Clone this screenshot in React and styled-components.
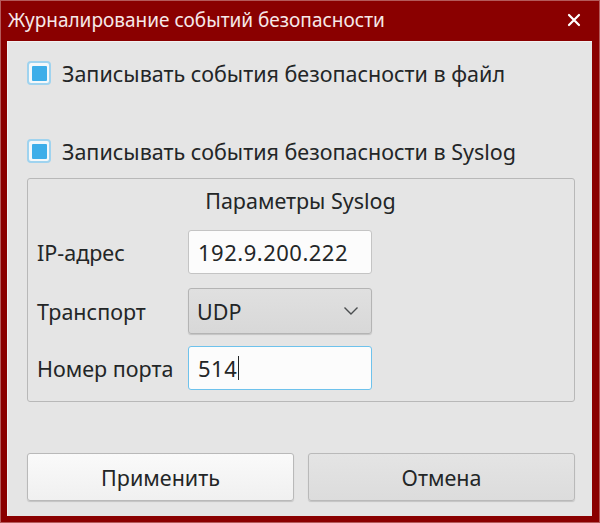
import React from "react";
import styled, { createGlobalStyle } from "styled-components";

const Global = createGlobalStyle`
  html, body {
    margin: 0;
    padding: 0;
    background: #8b0000;
  }
  * { box-sizing: border-box; }
`;

const Window = styled.div`
  width: 600px;
  height: 523px;
  background: #8a0000;
  border: 1px solid #b45a5a;
  display: flex;
  flex-direction: column;
  font-family: "Noto Sans", "Open Sans", sans-serif;
  color: #232627;
`;

const TitleBar = styled.div`
  height: 40px;
  flex: 0 0 40px;
  display: flex;
  align-items: center;
  justify-content: space-between;
  padding: 0 18px 2px 7px;
  color: #f6e8e8;
  font-size: 19px;
`;

const Close = styled.span`
  display: flex;
  align-items: center;
`;

const Panel = styled.div`
  flex: 1;
  margin: 0 7px 6px 6px;
  background: #e5e5e5;
  border-top: 1px solid #f2f2f2;
  border-left: 1px solid #f2f2f2;
  padding: 19px 17px 15px 19px;
  display: flex;
  flex-direction: column;
`;

const CheckRow = styled.label`
  display: flex;
  align-items: center;
  gap: 11px;
  height: 24px;
  font-size: 21.5px;
  margin-top: ${(p) => p.$top || 0}px;
`;

const Box = styled.span`
  flex: 0 0 24px;
  width: 24px;
  height: 24px;
  border-radius: 4px;
  border: 2px solid #9fd3ef;
  background: #f4f8fa;
  display: flex;
  align-items: center;
  justify-content: center;
  &::after {
    content: "";
    width: 15px;
    height: 15px;
    border-radius: 1px;
    background: #3daee9;
  }
`;

const Group = styled.fieldset`
  margin: 15px 0 0 0;
  padding: 0 10px 11px 9px;
  height: 224px;
  border: 1px solid #b8b8b8;
  border-radius: 3px;
  display: flex;
  flex-direction: column;
  min-width: 0;
`;

const GroupTitle = styled.div`
  text-align: center;
  font-size: 21.5px;
  height: 51px;
  line-height: 44px;
`;

const FormRow = styled.div`
  display: grid;
  grid-template-columns: 151px 184px;
  align-items: center;
  height: 44px;
  margin-bottom: 14px;
  font-size: 21.5px;
  &:last-child {
    margin-bottom: 0;
  }
`;

const Input = styled.div`
  height: 44px;
  background: #fcfcfc;
  border: 1px solid ${(p) => (p.$focus ? "#6ec2ec" : "#c4c4c4")};
  border-radius: 3px;
  display: flex;
  align-items: center;
  padding-left: 9px;
  font-size: 22px;
  letter-spacing: 0.5px;
`;

const Caret = styled.span`
  display: inline-block;
  width: 1px;
  height: 24px;
  background: #232627;
  margin-left: 1px;
`;

const Combo = styled.div`
  height: 46px;
  background: linear-gradient(#e0e0e0, #d8d8d8);
  border: 1px solid #b4b4b4;
  border-radius: 3px;
  box-shadow: 0 1px 1px rgba(0, 0, 0, 0.15);
  display: flex;
  align-items: center;
  justify-content: space-between;
  padding: 0 12px 0 8px;
  font-size: 21.5px;
`;

const Footer = styled.div`
  margin-top: auto;
  display: grid;
  grid-template-columns: 1fr 1fr;
  gap: 14px;
`;

const Button = styled.button`
  height: 48px;
  font-family: inherit;
  font-size: 21.5px;
  color: #232627;
  border: 1px solid #b9b9b9;
  border-radius: 3px;
  box-shadow: 0 1px 1px rgba(0, 0, 0, 0.15);
  background: ${(p) =>
    p.$primary ? "linear-gradient(#fafafa, #f0f0f0)" : "linear-gradient(#e4e4e4, #dcdcdc)"};
`;

export default function App() {
  return (
    <>
      <Global />
      <Window>
        <TitleBar>
          <span>Журналирование событий безопасности</span>
          <Close>
            <svg width="14" height="14" viewBox="0 0 14 14">
              <path d="M2 2L12 12M12 2L2 12" stroke="#fff" strokeWidth="2.2" strokeLinecap="round" />
            </svg>
          </Close>
        </TitleBar>
        <Panel>
          <CheckRow>
            <Box />
            Записывать события безопасности в файл
          </CheckRow>
          <CheckRow $top={54}>
            <Box />
            Записывать события безопасности в Syslog
          </CheckRow>
          <Group>
            <GroupTitle>Параметры Syslog</GroupTitle>
            <FormRow>
              <span>IP-адрес</span>
              <Input>192.9.200.222</Input>
            </FormRow>
            <FormRow>
              <span>Транспорт</span>
              <Combo>
                UDP
                <svg width="16" height="10" viewBox="0 0 16 10">
                  <path d="M1.5 1.5L8 8L14.5 1.5" fill="none" stroke="#4a4d4f" strokeWidth="1.4" />
                </svg>
              </Combo>
            </FormRow>
            <FormRow>
              <span>Номер порта</span>
              <Input $focus>
                514
                <Caret />
              </Input>
            </FormRow>
          </Group>
          <Footer>
            <Button $primary>Применить</Button>
            <Button>Отмена</Button>
          </Footer>
        </Panel>
      </Window>
    </>
  );
}
